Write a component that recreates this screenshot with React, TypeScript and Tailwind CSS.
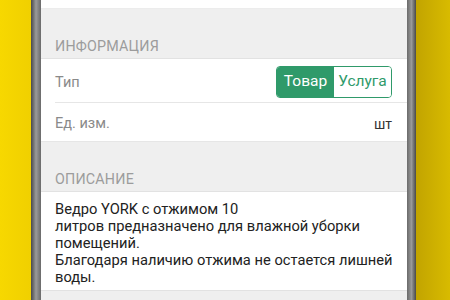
import React from 'react';

const Section: React.FC<{ title: string }> = ({ title }) => (
  <div className="h-[50px] bg-[#efefef] border-b border-[#e2e2e2] flex items-end pl-[14px] pb-[5px]">
    <span className="text-[14.3px] leading-[14px] tracking-[0.2px] text-[#9c9c9c]">{title}</span>
  </div>
);

export default function App() {
  return (
    <div className="w-[450px] h-[300px] overflow-hidden flex font-['Roboto',sans-serif]">
      <div className="w-[31px] h-full bg-gradient-to-r from-[#f7d800] to-[#f0d000]" />
      <div className="w-[10px] h-full bg-gradient-to-r from-[#4a4a4a] via-[#9a9a9a] to-[#6a6a6a]" />

      <div className="w-[366px] h-full bg-white flex flex-col">
        <div className="h-[9px] bg-white border-b border-[#ececec]" />
        <Section title="ИНФОРМАЦИЯ" />

        <div className="h-[43px] flex items-center justify-between pl-[14px] pr-[15px]">
          <span className="text-[14.5px] leading-[16px] pt-[4px] text-[#8a8a8a]">Тип</span>
          <div className="flex h-[32px] mt-[2px] rounded-[4px] overflow-hidden border border-[#2f9a6a]">
            <div className="w-[57px] bg-[#2f9a6a] text-white text-[15.5px] flex items-center justify-center">
              Товар
            </div>
            <div className="w-[57px] bg-white text-[#2f9a6a] text-[15.5px] flex items-center justify-center">
              Услуга
            </div>
          </div>
        </div>
        <div className="ml-[14px] h-px bg-[#e6e6e6]" />
        <div className="h-[39px] flex items-center justify-between pl-[14px] pr-[15px] border-b border-[#e6e6e6]">
          <span className="text-[14.5px] leading-[16px] pt-[3px] text-[#8a8a8a]">Ед. изм.</span>
          <span className="text-[14px] leading-[16px] pt-[3px] text-[#333]">шт</span>
        </div>

        <Section title="ОПИСАНИЕ" />

        <div className="h-[99px] pl-[14px] pt-[9px] border-b border-[#e2e2e2]">
          <p className="text-[14.7px] leading-[17px] text-[#222] whitespace-nowrap">
            Ведро YORK с отжимом 10
            <br />
            литров предназначено для влажной уборки
            <br />
            помещений.
            <br />
            Благодаря наличию отжима не остается лишней
            <br />
            воды.
          </p>
        </div>
        <div className="flex-1 bg-[#efefef]" />
      </div>

      <div className="w-[9px] h-full bg-gradient-to-r from-[#6a6a6a] via-[#9a9a9a] to-[#4a4a4a]" />
      <div className="flex-1 h-full bg-gradient-to-r from-[#c2a400] to-[#d8bb00]" />
    </div>
  );
}
